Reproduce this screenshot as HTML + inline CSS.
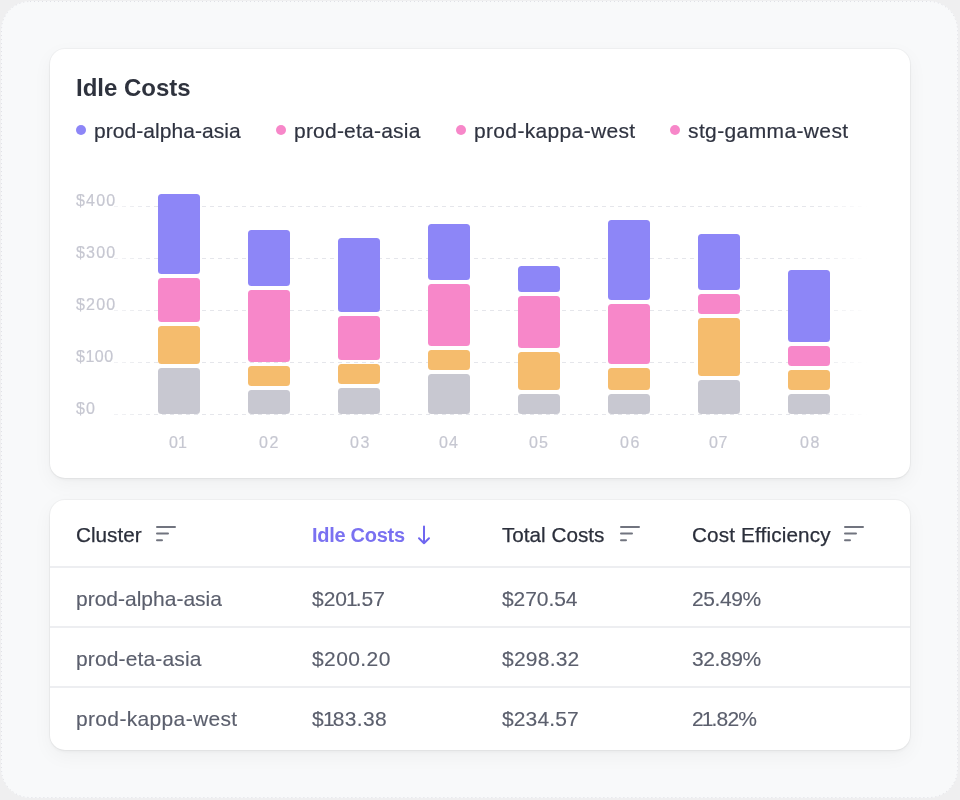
<!DOCTYPE html>
<html>
<head>
<meta charset="utf-8">
<style>
html,body{margin:0;padding:0;}
body{width:960px;height:800px;background:#efeff0;position:relative;overflow:hidden;font-family:"Liberation Sans",sans-serif;}
.frame{position:absolute;left:1px;top:1px;width:957px;height:797px;border-radius:29px;background:#f8f9fa;}
.card{position:absolute;left:50px;width:860px;background:#fff;border-radius:15px;box-shadow:0 0 0 1px rgba(0,0,0,0.03),0 2px 3px rgba(0,0,0,0.035),0 6px 20px rgba(0,0,0,0.045);}
#chart{top:49px;height:429px;}
#table{top:500px;height:250px;}
.t{position:absolute;white-space:nowrap;line-height:1;will-change:transform;}
.title{font-size:24px;font-weight:700;color:#2e323d;}
.leg{font-size:21px;color:#2f3340;-webkit-text-stroke:0.2px #2f3340;}
.dot{position:absolute;top:125px;width:10px;height:10px;border-radius:50%;}
.ylab{font-size:16px;color:#c6c7d1;-webkit-text-stroke:0.2px #c6c7d1;}
.xlab{font-size:16px;color:#c6c7d1;-webkit-text-stroke:0.2px #c6c7d1;}
.th{font-size:20.7px;color:#2b2f3b;-webkit-text-stroke:0.25px #2b2f3b;}
.td{font-size:21px;color:#5b5f6d;-webkit-text-stroke:0.15px #5b5f6d;}
.sep{position:absolute;left:50px;width:860px;height:2px;background:#edeef1;}
svg{position:absolute;left:0;top:0;}
</style>
</head>
<body>
<div class="frame"></div>
<svg width="960" height="800" viewBox="0 0 960 800"><rect x="1.5" y="1.5" width="956" height="796" rx="28.5" fill="none" stroke="#dfe0e6" stroke-width="1" stroke-dasharray="1 3"/></svg>
<div class="card" id="chart"></div>
<div class="card" id="table"></div>

<div class="t title" style="left:76px;top:76px;">Idle Costs</div>

<div class="dot" style="left:76px;background:#8d86f7"></div>
<div class="t leg" style="left:94px;top:120px;letter-spacing:0.06px">prod-alpha-asia</div>
<div class="dot" style="left:276px;background:#f787c9"></div>
<div class="t leg" style="left:294px;top:120px;letter-spacing:0.22px">prod-eta-asia</div>
<div class="dot" style="left:456px;background:#f787c9"></div>
<div class="t leg" style="left:474px;top:120px;letter-spacing:0.34px">prod-kappa-west</div>
<div class="dot" style="left:670px;background:#f787c9"></div>
<div class="t leg" style="left:688px;top:120px;letter-spacing:0.38px">stg-gamma-west</div>

<svg width="960" height="800" viewBox="0 0 960 800">
  <defs><linearGradient id="gl" gradientUnits="userSpaceOnUse" x1="114" y1="0" x2="868" y2="0">
    <stop offset="0" stop-color="#e5e6eb" stop-opacity="0.5"/>
    <stop offset="0.06" stop-color="#e5e6eb" stop-opacity="1"/>
    <stop offset="0.93" stop-color="#e5e6eb" stop-opacity="1"/>
    <stop offset="1" stop-color="#e5e6eb" stop-opacity="0"/>
  </linearGradient></defs>
  <g stroke="url(#gl)" stroke-width="1" stroke-dasharray="4 4">
    <line x1="114" y1="206.5" x2="868" y2="206.5"/>
    <line x1="114" y1="258.5" x2="868" y2="258.5"/>
    <line x1="114" y1="310.5" x2="868" y2="310.5"/>
    <line x1="114" y1="362.5" x2="868" y2="362.5"/>
    <line x1="114" y1="414.5" x2="868" y2="414.5"/>
  </g>
  <g>
    <rect x="158" y="194" width="42" height="80" rx="3.5" fill="#8d86f7"/>
    <rect x="158" y="278" width="42" height="44" rx="3.5" fill="#f787c9"/>
    <rect x="158" y="326" width="42" height="38" rx="3.5" fill="#f5bc6d"/>
    <rect x="158" y="368" width="42" height="46" rx="3.5" fill="#c8c8d1"/>
    <rect x="248" y="230" width="42" height="56" rx="3.5" fill="#8d86f7"/>
    <rect x="248" y="290" width="42" height="72" rx="3.5" fill="#f787c9"/>
    <rect x="248" y="366" width="42" height="20" rx="3.5" fill="#f5bc6d"/>
    <rect x="248" y="390" width="42" height="24" rx="3.5" fill="#c8c8d1"/>
    <rect x="338" y="238" width="42" height="74" rx="3.5" fill="#8d86f7"/>
    <rect x="338" y="316" width="42" height="44" rx="3.5" fill="#f787c9"/>
    <rect x="338" y="364" width="42" height="20" rx="3.5" fill="#f5bc6d"/>
    <rect x="338" y="388" width="42" height="26" rx="3.5" fill="#c8c8d1"/>
    <rect x="428" y="224" width="42" height="56" rx="3.5" fill="#8d86f7"/>
    <rect x="428" y="284" width="42" height="62" rx="3.5" fill="#f787c9"/>
    <rect x="428" y="350" width="42" height="20" rx="3.5" fill="#f5bc6d"/>
    <rect x="428" y="374" width="42" height="40" rx="3.5" fill="#c8c8d1"/>
    <rect x="518" y="266" width="42" height="26" rx="3.5" fill="#8d86f7"/>
    <rect x="518" y="296" width="42" height="52" rx="3.5" fill="#f787c9"/>
    <rect x="518" y="352" width="42" height="38" rx="3.5" fill="#f5bc6d"/>
    <rect x="518" y="394" width="42" height="20" rx="3.5" fill="#c8c8d1"/>
    <rect x="608" y="220" width="42" height="80" rx="3.5" fill="#8d86f7"/>
    <rect x="608" y="304" width="42" height="60" rx="3.5" fill="#f787c9"/>
    <rect x="608" y="368" width="42" height="22" rx="3.5" fill="#f5bc6d"/>
    <rect x="608" y="394" width="42" height="20" rx="3.5" fill="#c8c8d1"/>
    <rect x="698" y="234" width="42" height="56" rx="3.5" fill="#8d86f7"/>
    <rect x="698" y="294" width="42" height="20" rx="3.5" fill="#f787c9"/>
    <rect x="698" y="318" width="42" height="58" rx="3.5" fill="#f5bc6d"/>
    <rect x="698" y="380" width="42" height="34" rx="3.5" fill="#c8c8d1"/>
    <rect x="788" y="270" width="42" height="72" rx="3.5" fill="#8d86f7"/>
    <rect x="788" y="346" width="42" height="20" rx="3.5" fill="#f787c9"/>
    <rect x="788" y="370" width="42" height="20" rx="3.5" fill="#f5bc6d"/>
    <rect x="788" y="394" width="42" height="20" rx="3.5" fill="#c8c8d1"/>
  </g>
</svg>

<div class="t ylab" style="left:76px;top:193px;letter-spacing:1.2px">$400</div>
<div class="t ylab" style="left:76px;top:245px;letter-spacing:1.2px">$300</div>
<div class="t ylab" style="left:76px;top:297px;letter-spacing:1.2px">$200</div>
<div class="t ylab" style="left:76px;top:349px;letter-spacing:0.5px">$100</div>
<div class="t ylab" style="left:76px;top:401px;letter-spacing:1.2px">$0</div>

<div class="t xlab" style="left:169px;top:435px;letter-spacing:0px">01</div>
<div class="t xlab" style="left:259px;top:435px;letter-spacing:1.5px">02</div>
<div class="t xlab" style="left:350px;top:435px;letter-spacing:1.5px">03</div>
<div class="t xlab" style="left:439px;top:435px;letter-spacing:1.2px">04</div>
<div class="t xlab" style="left:529px;top:435px;letter-spacing:1.1px">05</div>
<div class="t xlab" style="left:620px;top:435px;letter-spacing:1.5px">06</div>
<div class="t xlab" style="left:709px;top:435px;letter-spacing:0.7px">07</div>
<div class="t xlab" style="left:800px;top:435px;letter-spacing:1.5px">08</div>

<div class="t th" style="left:76px;top:525px;">Cluster</div>
<div class="t th" style="left:312px;top:525px;color:#7a71f1;font-weight:700;font-size:20px;letter-spacing:-0.28px;-webkit-text-stroke:0">Idle Costs</div>
<div class="t th" style="left:502px;top:525px;">Total Costs</div>
<div class="t th" style="left:692px;top:525px;letter-spacing:0.15px">Cost Efficiency</div>
<svg width="960" height="800" viewBox="0 0 960 800" fill="none" stroke-linecap="round">
  <g stroke="#71747f" stroke-width="2">
    <path d="M157 527H175M157 533.6H168M157 540.3H162"/>
    <path d="M621 527H639M621 533.6H632M621 540.3H626"/>
    <path d="M845 527H863M845 533.6H856M845 540.3H850"/>
  </g>
  <g stroke="#6f66f0" stroke-width="2" stroke-linejoin="round">
    <path d="M424 526.5V543.2M419 538.2L424 543.2L429 538.2"/>
  </g>
</svg>
<div class="sep" style="top:566px"></div>
<div class="sep" style="top:626px"></div>
<div class="sep" style="top:686px"></div>

<div class="t td" style="left:76px;top:588px;letter-spacing:0.0px">prod-alpha-asia</div>
<div class="t td" style="left:312px;top:588px;letter-spacing:0.0px">$20<span style="margin-left:-1px;letter-spacing:-2px">1</span>.57</div>
<div class="t td" style="left:502px;top:588px;letter-spacing:-0.07px">$270.54</div>
<div class="t td" style="left:692px;top:588px;letter-spacing:-0.42px">25.49%</div>
<div class="t td" style="left:76px;top:648px;letter-spacing:0.14px">prod-eta-asia</div>
<div class="t td" style="left:312px;top:648px;letter-spacing:0.4px">$200.20</div>
<div class="t td" style="left:502px;top:648px;letter-spacing:0.23px">$298.32</div>
<div class="t td" style="left:692px;top:648px;letter-spacing:-0.42px">32.89%</div>
<div class="t td" style="left:76px;top:708px;letter-spacing:0.34px">prod-kappa-west</div>
<div class="t td" style="left:312px;top:708px;letter-spacing:0.35px">$<span style="margin-left:-1px;letter-spacing:-2px">1</span>83.38</div>
<div class="t td" style="left:502px;top:708px;letter-spacing:0.13px">$234.57</div>
<div class="t td" style="left:692px;top:708px;letter-spacing:-0.82px">2<span style="margin-left:-1px;letter-spacing:-2px">1</span>.82%</div>

</body>
</html>
